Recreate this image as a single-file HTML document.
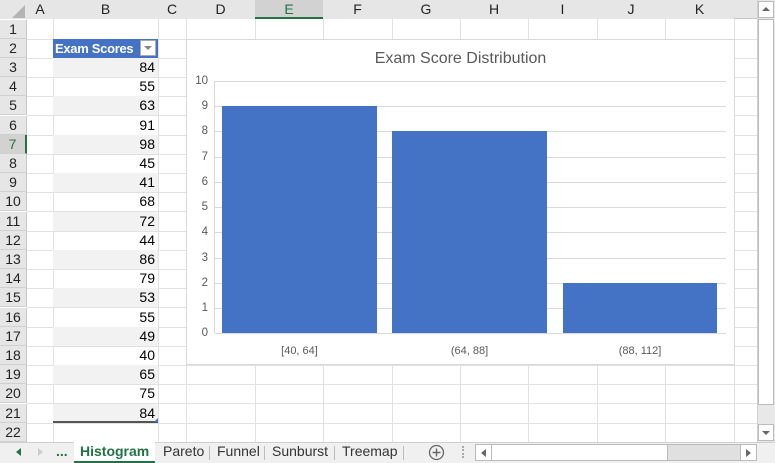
<!DOCTYPE html><html><head><style>
*{box-sizing:border-box;margin:0;padding:0}
body{width:775px;height:463px;overflow:hidden;background:#fff;font-family:"Liberation Sans",Calibri,sans-serif;position:relative}
.a{position:absolute}
.hd{background:#e6e6e6;color:#222;font-size:14px;text-align:center;line-height:19px}
.vl{position:absolute;top:19px;width:1px;height:423px;background:#e1e1e1}
.hl{position:absolute;left:27px;width:730px;height:1px;background:#e1e1e1}
.rn{position:absolute;left:0;width:27px;font-size:14px;text-align:center;background:#e6e6e6;color:#222;border-right:1px solid #c6c6c6;border-bottom:1px solid #d0d0d0}
.c{position:absolute;left:53px;width:105px;font-size:14px;text-align:right;padding-right:3px;color:#000}
.yl{position:absolute;left:190px;width:18px;text-align:right;font-size:11.5px;color:#595959}
.g{position:absolute;left:215px;width:511px;height:1px;background:#d9d9d9}
.bar{position:absolute;background:#4472c4}
.tab{position:absolute;top:442px;height:21px;font-size:14px;line-height:19px;color:#333}
</style></head><body>
<div class="a hd" style="left:0;top:0;width:757px;height:19px;border-bottom:1px solid #c6c6c6"></div>
<div class="a" style="left:0;top:0;width:27px;height:19px;background:#e6e6e6"></div>
<svg class="a" style="left:12px;top:5px" width="13" height="13"><polygon points="13,0 13,13 0,13" fill="#b4b4b4"/></svg>
<div class="a hd" style="left:27px;width:26px;top:0">A</div>
<div class="a hd" style="left:53px;width:105px;top:0">B</div>
<div class="a hd" style="left:158px;width:28px;top:0">C</div>
<div class="a hd" style="left:186px;width:69px;top:0">D</div>
<div class="a hd" style="left:255px;width:68px;top:0;background:#d2d2d2;color:#217346;border-bottom:2px solid #217346;height:19px">E</div>
<div class="a hd" style="left:323px;width:69px;top:0">F</div>
<div class="a hd" style="left:392px;width:68px;top:0">G</div>
<div class="a hd" style="left:460px;width:68px;top:0">H</div>
<div class="a hd" style="left:528px;width:69px;top:0">I</div>
<div class="a hd" style="left:597px;width:68px;top:0">J</div>
<div class="a hd" style="left:665px;width:69px;top:0">K</div>
<div class="vl" style="left:53px"></div><div class="vl" style="left:158px"></div><div class="vl" style="left:186px"></div><div class="vl" style="left:255px"></div><div class="vl" style="left:323px"></div><div class="vl" style="left:392px"></div><div class="vl" style="left:460px"></div><div class="vl" style="left:528px"></div><div class="vl" style="left:597px"></div><div class="vl" style="left:665px"></div><div class="vl" style="left:734px"></div>
<div id="rows"></div>
<script>
var v=[84,55,63,91,98,45,41,68,72,44,86,79,53,55,49,40,65,75,84],h='';
for(var n=1;n<=22;n++){var t=19.5+(n-1)*19.2;
h+='<div class="hl" style="top:'+(t+19)+'px"></div>';
h+='<div class="rn" style="top:'+t+'px;height:19.2px;line-height:19px;'+(n==7?'background:#d2d2d2;color:#217346;border-right:2px solid #217346':'')+'">'+n+'</div>';
if(n>=3&&n<=21){h+='<div class="c" style="top:'+t+'px;height:19.2px;line-height:19px;'+(n%2?'background:#f2f2f2;':'')+(n==21?'border-bottom:2px solid #555;':'')+'">'+v[n-3]+'</div>';}
}
document.getElementById('rows').innerHTML=h;
</script>
<div class="a" style="left:53px;top:38.7px;width:105px;height:19.2px;background:#4472c4;color:#fff;font-weight:bold;font-size:13px;letter-spacing:-0.3px;line-height:19px;padding-left:2px">Exam Scores</div>
<div class="a" style="left:140px;top:40px;width:16px;height:16px;background:#fff;border:1px solid #aaa"></div>
<svg class="a" style="left:144px;top:46px" width="8" height="5"><polygon points="0,0 8,0 4,4" fill="#888"/></svg>
<svg class="a" style="left:154px;top:418px" width="4" height="4"><polygon points="4,0 4,4 0,4" fill="#4472c4"/></svg>
<!-- chart -->
<div class="a" style="left:186px;top:39px;width:549px;height:326px;background:#fff;border:1px solid #d9d9d9"></div>
<div class="a" style="left:186px;top:50px;width:549px;text-align:center;font-size:16px;color:#595959">Exam Score Distribution</div>
<div class="a" style="left:214px;top:81px;width:1px;height:252px;background:#d9d9d9"></div>
<div class="g" style="top:81px"></div><div class="g" style="top:106px"></div><div class="g" style="top:131px"></div><div class="g" style="top:157px"></div><div class="g" style="top:182px"></div><div class="g" style="top:207px"></div><div class="g" style="top:232px"></div><div class="g" style="top:258px"></div><div class="g" style="top:283px"></div><div class="g" style="top:308px"></div><div class="g" style="top:333px"></div>
<div class="yl" style="top:75px">10</div><div class="yl" style="top:100px">9</div><div class="yl" style="top:125px">8</div><div class="yl" style="top:151px">7</div><div class="yl" style="top:176px">6</div><div class="yl" style="top:201px">5</div><div class="yl" style="top:226px">4</div><div class="yl" style="top:252px">3</div><div class="yl" style="top:277px">2</div><div class="yl" style="top:302px">1</div><div class="yl" style="top:327px">0</div>
<div class="bar" style="left:222px;top:106px;width:155px;height:227px"></div>
<div class="bar" style="left:392px;top:131px;width:155px;height:202px"></div>
<div class="bar" style="left:563px;top:283px;width:154px;height:50px"></div>
<div class="a" style="left:222px;top:345px;width:155px;text-align:center;font-size:11px;color:#595959">[40, 64]</div>
<div class="a" style="left:392px;top:345px;width:155px;text-align:center;font-size:11px;color:#595959">(64, 88]</div>
<div class="a" style="left:563px;top:345px;width:154px;text-align:center;font-size:11px;color:#595959">(88, 112]</div>
<!-- vscroll -->
<div class="a" style="left:757px;top:0;width:18px;height:442px;background:#e8e8e8;border-left:1px solid #d0d0d0"></div>
<div class="a" style="left:758px;top:1px;width:16px;height:17px;background:#fff;border:1px solid #bbb"></div>
<svg class="a" style="left:762px;top:7px" width="8" height="5"><polygon points="0,4 8,4 4,0" fill="#666"/></svg>
<div class="a" style="left:758px;top:19px;width:16px;height:386px;background:#fff;border:1px solid #bbb"></div>
<div class="a" style="left:758px;top:424px;width:16px;height:17px;background:#fff;border:1px solid #bbb"></div>
<svg class="a" style="left:762px;top:431px" width="8" height="5"><polygon points="0,0 8,0 4,4" fill="#666"/></svg>
<!-- tab bar -->
<div class="a" style="left:0;top:442px;width:775px;height:21px;background:#f0f0f0;border-top:1px solid #d0d0d0"></div>
<svg class="a" style="left:16px;top:448px" width="6" height="8"><polygon points="5,0 5,8 0,4" fill="#217346"/></svg>
<svg class="a" style="left:38px;top:448px" width="6" height="8"><polygon points="0,0 0,8 5,4" fill="#ccc"/></svg>
<div class="tab" style="left:56px;color:#217346;font-weight:bold">...</div>
<div class="a" style="left:74px;top:442px;width:81px;height:21px;background:#fff;border-bottom:2px solid #217346"></div>
<div class="tab" style="left:80px;color:#217346;font-weight:bold">Histogram</div>
<div class="tab" style="left:163px">Pareto</div>
<div class="a" style="left:209px;top:446px;width:1px;height:14px;background:#bbb"></div>
<div class="tab" style="left:217px">Funnel</div>
<div class="a" style="left:264px;top:446px;width:1px;height:14px;background:#bbb"></div>
<div class="tab" style="left:272px">Sunburst</div>
<div class="a" style="left:334px;top:446px;width:1px;height:14px;background:#bbb"></div>
<div class="tab" style="left:342px">Treemap</div>
<div class="a" style="left:403px;top:446px;width:1px;height:14px;background:#bbb"></div>
<svg class="a" style="left:428px;top:444px" width="17" height="17"><circle cx="8.5" cy="8.5" r="7" fill="none" stroke="#666" stroke-width="1.3"/><path d="M8.5 4.5v8M4.5 8.5h8" stroke="#666" stroke-width="1.4"/></svg>
<div class="a" style="left:462px;top:446px;width:2px;height:12px;border-left:2px dotted #aaa"></div>
<div class="a" style="left:475px;top:444px;width:282px;height:17px;background:#e0e0e0;border:1px solid #bbb"></div>
<div class="a" style="left:476px;top:445px;width:16px;height:15px;background:#fff;border-right:1px solid #bbb"></div>
<svg class="a" style="left:481px;top:449px" width="5" height="8"><polygon points="5,0 5,8 0,4" fill="#666"/></svg>
<div class="a" style="left:492px;top:445px;width:176px;height:15px;background:#fff;border-right:1px solid #bbb"></div>
<div class="a" style="left:740px;top:445px;width:16px;height:15px;background:#fff;border-left:1px solid #bbb"></div>
<svg class="a" style="left:746px;top:449px" width="5" height="8"><polygon points="0,0 0,8 5,4" fill="#666"/></svg>
</body></html>
